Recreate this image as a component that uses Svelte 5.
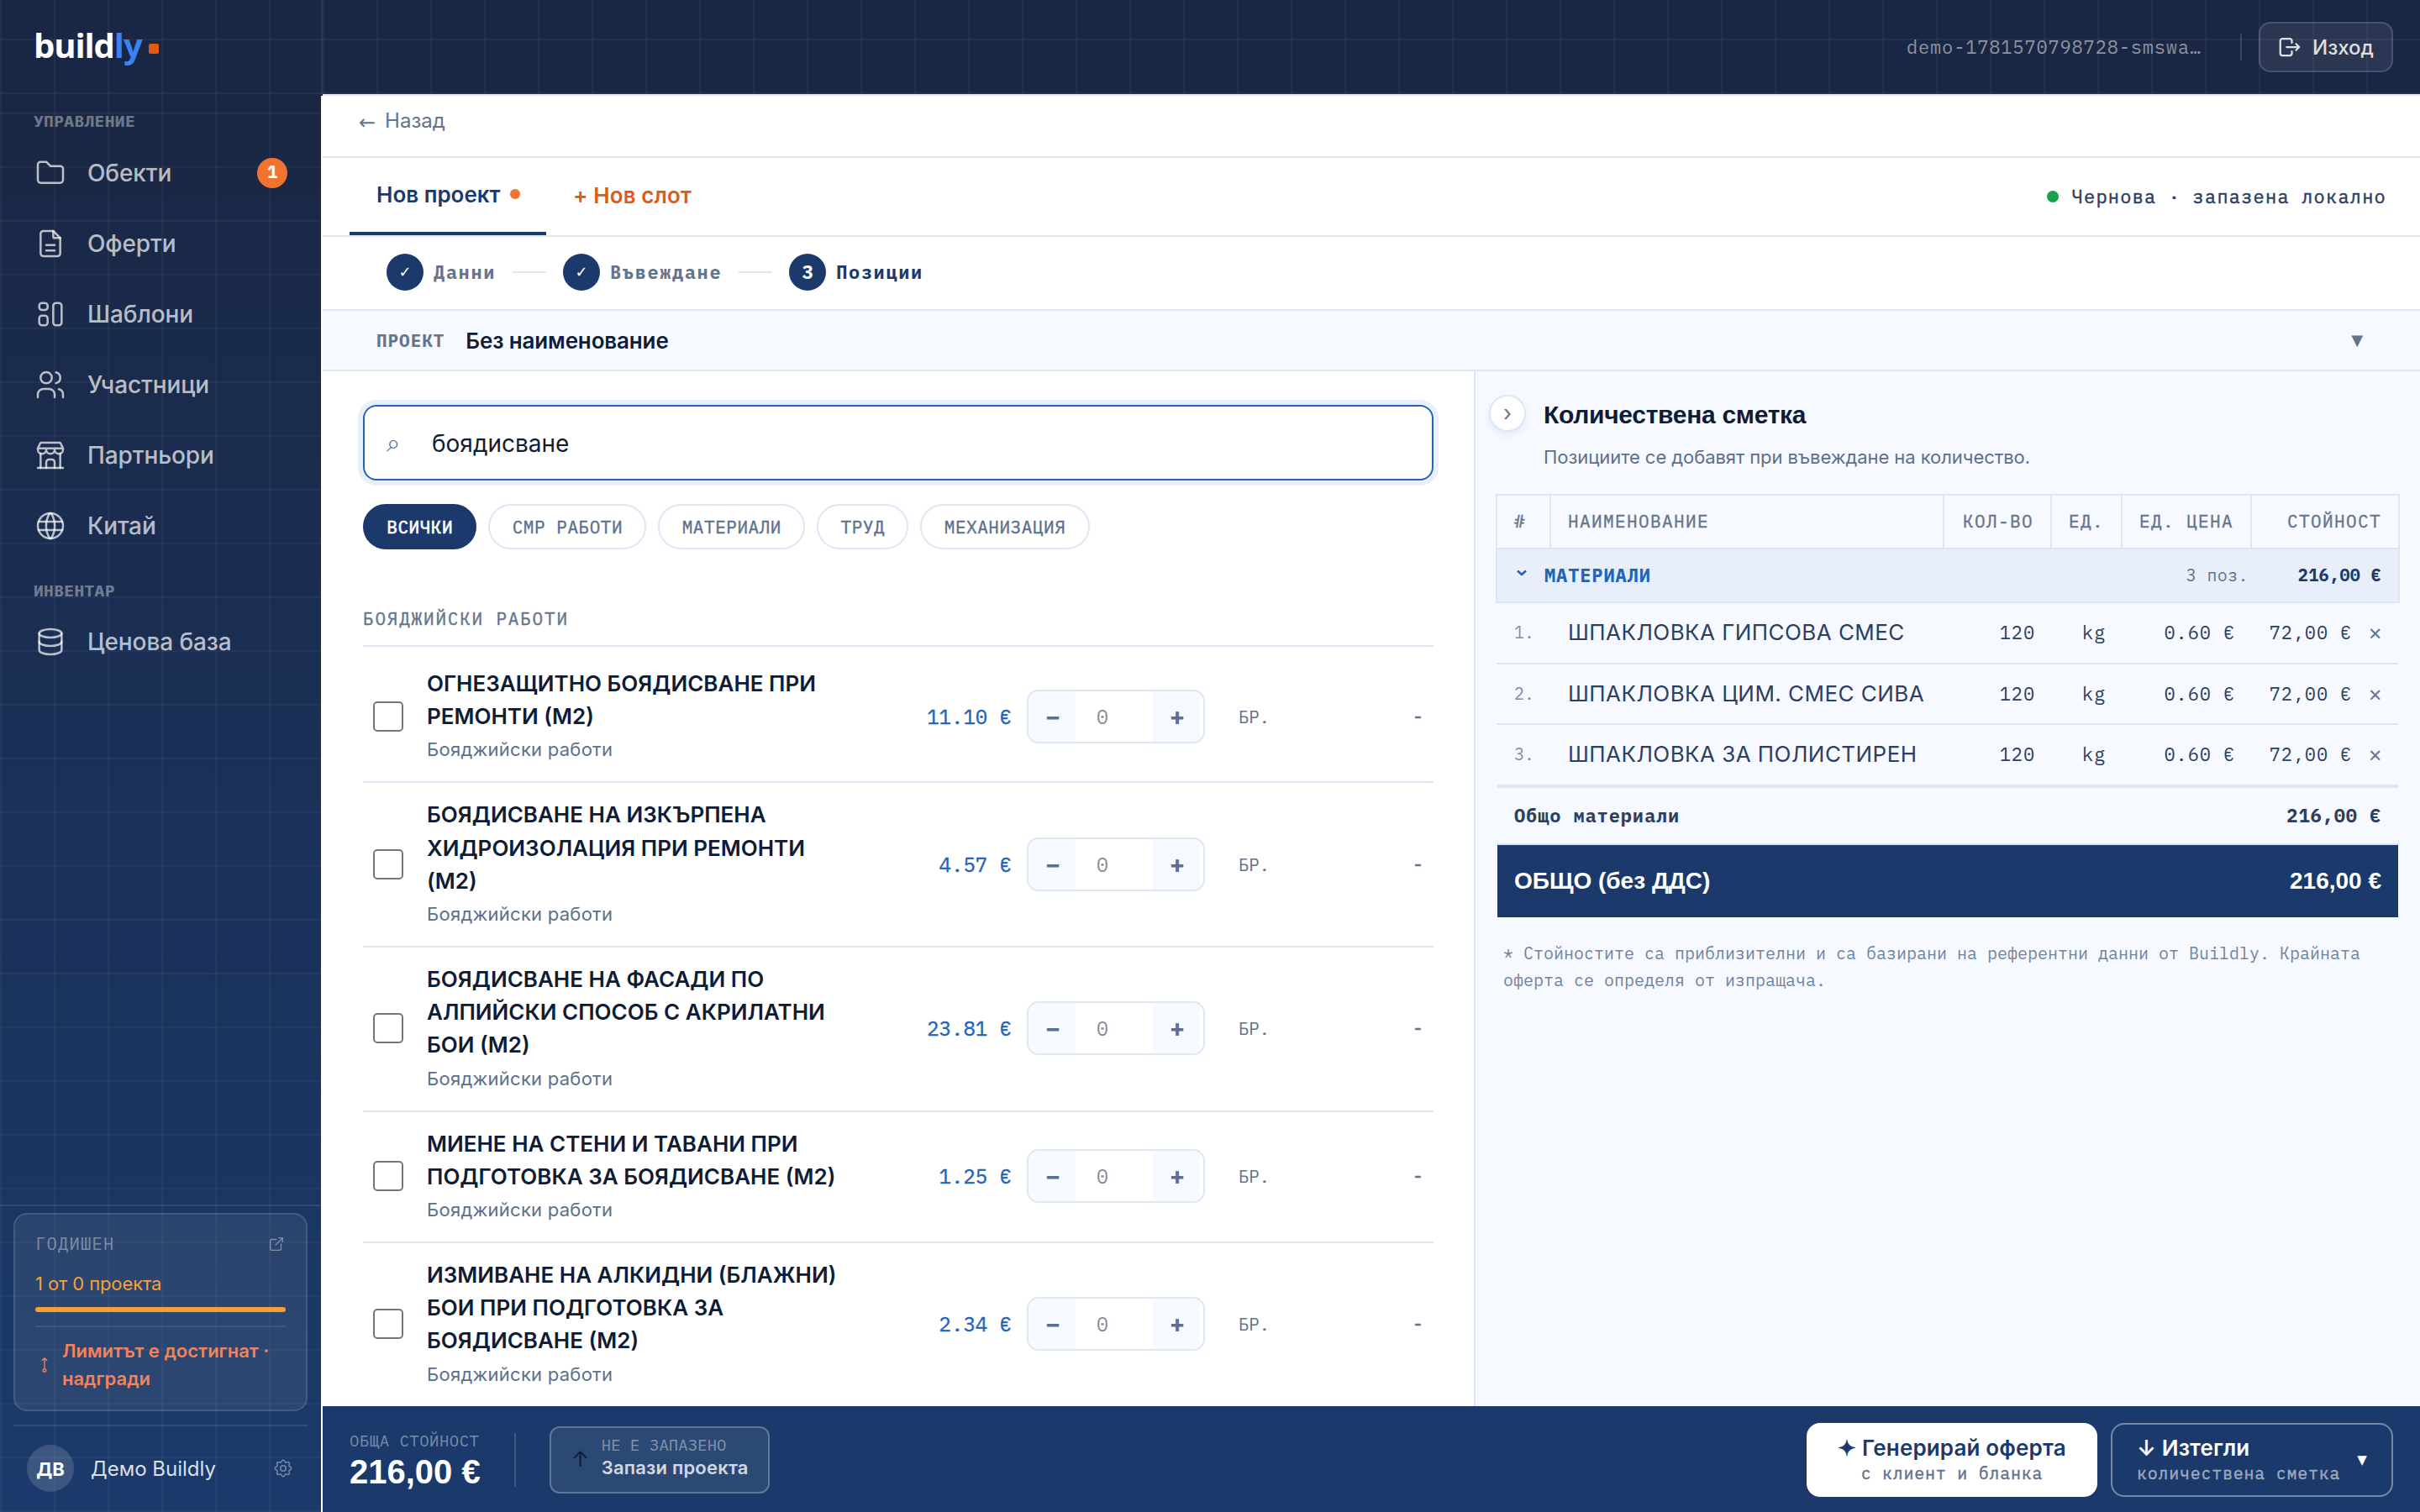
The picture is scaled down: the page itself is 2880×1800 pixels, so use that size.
<script lang="ts">
    type NavItem = { label: string; icon: string; badge?: number };

    // Sidebar navigation
    const manage: NavItem[] = [
        { label: 'Обекти', icon: 'folder', badge: 1 },
        { label: 'Оферти', icon: 'file' },
        { label: 'Шаблони', icon: 'board' },
        { label: 'Участници', icon: 'users' },
        { label: 'Партньори', icon: 'store' },
        { label: 'Китай', icon: 'globe' }
    ];
    const inventory: NavItem[] = [{ label: 'Ценова база', icon: 'database' }];

    const steps = [
        { mark: '✓', label: 'Данни' },
        { mark: '✓', label: 'Въвеждане' },
        { mark: '3', label: 'Позиции' }
    ];

    const filters = ['ВСИЧКИ', 'СМР РАБОТИ', 'МАТЕРИАЛИ', 'ТРУД', 'МЕХАНИЗАЦИЯ'];
    let activeFilter = $state('ВСИЧКИ');
    let query = $state('боядисване');

    const category = 'Бояджийски работи';
    const works = [
        { name: 'ОГНЕЗАЩИТНО БОЯДИСВАНЕ ПРИ РЕМОНТИ (М2)', price: 11.1 },
        { name: 'БОЯДИСВАНЕ НА ИЗКЪРПЕНА ХИДРОИЗОЛАЦИЯ ПРИ РЕМОНТИ (М2)', price: 4.57 },
        { name: 'БОЯДИСВАНЕ НА ФАСАДИ ПО АЛПИЙСКИ СПОСОБ С АКРИЛАТНИ БОИ (М2)', price: 23.81 },
        { name: 'МИЕНЕ НА СТЕНИ И ТАВАНИ ПРИ ПОДГОТОВКА ЗА БОЯДИСВАНЕ (М2)', price: 1.25 },
        { name: 'ИЗМИВАНЕ НА АЛКИДНИ (БЛАЖНИ) БОИ ПРИ ПОДГОТОВКА ЗА БОЯДИСВАНЕ (М2)', price: 2.34 }
    ];

    const materials = [
        { name: 'ШПАКЛОВКА ГИПСОВА СМЕС', qty: 120, unit: 'kg', price: 0.6 },
        { name: 'ШПАКЛОВКА ЦИМ. СМЕС СИВА', qty: 120, unit: 'kg', price: 0.6 },
        { name: 'ШПАКЛОВКА ЗА ПОЛИСТИРЕН', qty: 120, unit: 'kg', price: 0.6 }
    ];

    const money = (v: number) => v.toFixed(2).replace('.', ',') + ' €';
    const total = $derived(materials.reduce((sum, m) => sum + m.qty * m.price, 0));
</script>

{#snippet icon(name: string)}
    <svg class="icon" viewBox="0 0 24 24" fill="none" stroke="currentColor" stroke-width="1.5" stroke-linecap="round" stroke-linejoin="round">
        {#if name === 'folder'}
            <path d="M5 4h4l3 3h7a2 2 0 0 1 2 2v8a2 2 0 0 1 -2 2h-14a2 2 0 0 1 -2 -2v-11a2 2 0 0 1 2 -2" />
        {:else if name === 'file'}
            <path d="M14 3v4a1 1 0 0 0 1 1h4" />
            <path d="M17 21h-10a2 2 0 0 1 -2 -2v-14a2 2 0 0 1 2 -2h7l5 5v11a2 2 0 0 1 -2 2z" />
            <path d="M9 13h6M9 17h6" />
        {:else if name === 'board'}
            <rect x="4" y="4" width="6" height="5" rx="2" />
            <rect x="4" y="13" width="6" height="7" rx="2" />
            <rect x="14" y="4" width="6" height="16" rx="2" />
        {:else if name === 'users'}
            <circle cx="9" cy="7" r="4" />
            <path d="M3 21v-2a4 4 0 0 1 4 -4h4a4 4 0 0 1 4 4v2" />
            <path d="M16 3.13a4 4 0 0 1 0 7.75" />
            <path d="M21 21v-2a4 4 0 0 0 -3 -3.85" />
        {:else if name === 'store'}
            <path d="M3 21h18" />
            <path d="M3 7v1a3 3 0 0 0 6 0v-1m0 1a3 3 0 0 0 6 0v-1m0 1a3 3 0 0 0 6 0v-1h-18l2 -4h14l2 4" />
            <path d="M5 21v-10.15M19 21v-10.15" />
            <path d="M9 21v-4a2 2 0 0 1 2 -2h2a2 2 0 0 1 2 2v4" />
        {:else if name === 'globe'}
            <circle cx="12" cy="12" r="9" />
            <path d="M3.6 9h16.8M3.6 15h16.8" />
            <path d="M11.5 3a17 17 0 0 0 0 18M12.5 3a17 17 0 0 1 0 18" />
        {:else if name === 'database'}
            <ellipse cx="12" cy="6" rx="8" ry="3" />
            <path d="M4 6v6a8 3 0 0 0 16 0v-6" />
            <path d="M4 12v6a8 3 0 0 0 16 0v-6" />
        {:else if name === 'logout'}
            <path d="M14 8v-2a2 2 0 0 0 -2 -2h-7a2 2 0 0 0 -2 2v12a2 2 0 0 0 2 2h7a2 2 0 0 0 2 -2v-2" />
            <path d="M9 12h12l-3 -3M18 15l3 -3" />
        {:else if name === 'external'}
            <path d="M12 6h-6a2 2 0 0 0 -2 2v10a2 2 0 0 0 2 2h10a2 2 0 0 0 2 -2v-6" />
            <path d="M11 13l9 -9M15 4h5v5" />
        {:else if name === 'upgrade'}
            <path d="M12 17v-14M9 6l3 -3l3 3" />
            <circle cx="12" cy="19" r="2" />
        {:else if name === 'gear'}
            <path d="M10.325 4.317c.426 -1.756 2.924 -1.756 3.35 0a1.724 1.724 0 0 0 2.573 1.066c1.543 -.94 3.31 .826 2.37 2.37a1.724 1.724 0 0 0 1.065 2.572c1.756 .426 1.756 2.924 0 3.35a1.724 1.724 0 0 0 -1.066 2.573c.94 1.543 -.826 3.31 -2.37 2.37a1.724 1.724 0 0 0 -2.572 1.065c-.426 1.756 -2.924 1.756 -3.35 0a1.724 1.724 0 0 0 -2.573 -1.066c-1.543 .94 -3.31 -.826 -2.37 -2.37a1.724 1.724 0 0 0 -1.065 -2.572c-1.756 -.426 -1.756 -2.924 0 -3.35a1.724 1.724 0 0 0 1.066 -2.573c-.94 -1.543 .826 -3.31 2.37 -2.37c1 .608 2.296 .07 2.572 -1.065z" />
            <circle cx="12" cy="12" r="3" />
        {/if}
    </svg>
{/snippet}

{#snippet navItem(item: NavItem)}
    <a class="nav-item" href="#nav">
        {@render icon(item.icon)}
        <span>{item.label}</span>
        {#if item.badge}<b class="badge">{item.badge}</b>{/if}
    </a>
{/snippet}

<div class="app">
    <header class="topbar">
        <div class="logo">build<span>ly</span><i></i></div>
        <div class="account">
            <span class="email">demo-1781570798728-smswa…</span>
            <span class="account-line"></span>
            <button class="logout">{@render icon('logout')}Изход</button>
        </div>
    </header>

    <aside class="sidebar">
        <nav>
            <div class="nav-label">УПРАВЛЕНИЕ</div>
            {#each manage as item}{@render navItem(item)}{/each}
            <div class="nav-label second">ИНВЕНТАР</div>
            {#each inventory as item}{@render navItem(item)}{/each}
        </nav>

        <div class="side-foot">
            <div class="plan">
                <div class="plan-head"><span>ГОДИШЕН</span>{@render icon('external')}</div>
                <div class="plan-usage">1 от 0 проекта</div>
                <div class="plan-bar"></div>
                <div class="plan-limit">
                    {@render icon('upgrade')}
                    <span>Лимитът е достигнат · надгради</span>
                </div>
            </div>
            <div class="user">
                <span class="avatar" lang="bg">ДВ</span>
                <span class="user-name">Демо Buildly</span>
                {@render icon('gear')}
            </div>
        </div>
    </aside>

    <main>
        <div class="back"><span class="back-arrow">←</span>Назад</div>

        <div class="tabs">
            <button class="tab">Нов проект<i></i></button>
            <button class="tab-add">+ Нов слот</button>
            <div class="status"><i></i>Чернова · запазена локално</div>
        </div>

        <div class="steps">
            {#each steps as step, i}
                {#if i > 0}<span class="step-line"></span>{/if}
                <span class="step-mark" class:check={step.mark === '✓'}>{step.mark}</span>
                <span class="step-label" class:current={i === 2}>{step.label}</span>
            {/each}
        </div>

        <div class="project">
            <span class="project-label">ПРОЕКТ</span>
            <span class="project-name">Без наименование</span>
            <span class="project-toggle">▼</span>
        </div>

        <div class="content">
            <section class="catalog">
                <label class="search">
                    <span class="search-icon">⌕</span>
                    <input bind:value={query} />
                </label>

                <div class="filters">
                    {#each filters as f}
                        <button class="chip" class:active={activeFilter === f} onclick={() => (activeFilter = f)}>{f}</button>
                    {/each}
                </div>

                <div class="group-title">{category.toUpperCase()}</div>

                {#each works as work}
                    <div class="work">
                        <span class="checkbox"></span>
                        <div class="work-text">
                            <div class="work-name">{work.name}</div>
                            <div class="work-cat">{category}</div>
                        </div>
                        <span class="work-price">{work.price.toFixed(2)} €</span>
                        <div class="stepper">
                            <button>−</button>
                            <span class="amount">0</span>
                            <button>+</button>
                        </div>
                        <span class="work-unit">БР.</span>
                        <span class="work-sum">-</span>
                    </div>
                {/each}
            </section>

            <section class="bill">
                <div class="bill-head">
                    <button class="collapse">›</button>
                    <div>
                        <h2>Количествена сметка</h2>
                        <p>Позициите се добавят при въвеждане на количество.</p>
                    </div>
                </div>

                <div class="table">
                    <div class="cols thead">
                        <span>#</span>
                        <span>НАИМЕНОВАНИЕ</span>
                        <span class="right">КОЛ-ВО</span>
                        <span>ЕД.</span>
                        <span class="right">ЕД. ЦЕНА</span>
                        <span class="right">СТОЙНОСТ</span>
                    </div>
                    <div class="group-row">
                        <svg class="group-arrow" viewBox="0 0 12 8" fill="none" stroke="currentColor" stroke-width="2.6"><path d="M1 1.5l5 4.5l5 -4.5" /></svg>
                        <span class="group-name">МАТЕРИАЛИ</span>
                        <span class="group-count">{materials.length} поз.</span>
                        <span class="group-sum">{money(total)}</span>
                    </div>
                    <div class="tbody">
                        {#each materials as m, i}
                            <div class="cols trow">
                                <span class="num">{i + 1}.</span>
                                <span class="name">{m.name}</span>
                                <span class="right">{m.qty}</span>
                                <span class="right">{m.unit}</span>
                                <span class="right">{m.price.toFixed(2)} €</span>
                                <span class="sum">{money(m.qty * m.price)}<em>×</em></span>
                            </div>
                        {/each}
                        <div class="subtotal"><span>Общо материали</span><span>{money(total)}</span></div>
                        <div class="grand"><span>ОБЩО (без ДДС)</span><span>{money(total)}</span></div>
                    </div>
                </div>

                <p class="note">* Стойностите са приблизителни и са базирани на референтни данни от Buildly. Крайната оферта се определя от изпращача.</p>
            </section>
        </div>

        <footer class="bottombar">
            <div class="sum-box">
                <small>ОБЩА СТОЙНОСТ</small>
                <strong>{money(total)}</strong>
            </div>
            <span class="foot-line"></span>
            <button class="save">
                <span class="save-arrow">↑</span>
                <span class="save-text"><small>НЕ Е ЗАПАЗЕНО</small><b>Запази проекта</b></span>
            </button>
            <button class="cta generate"><b><span class="glyph">✦</span> Генерирай оферта</b><small>с клиент и бланка</small></button>
            <button class="cta download">
                <span class="dl-text"><b><span class="glyph">↓</span> Изтегли</b><small>количествена сметка</small></span>
                <span class="caret">▼</span>
            </button>
        </footer>
    </main>
</div>

<style>
    :global(body) {
        margin: 0;
        background: #fff;
    }

    .app {
        --navy: #1b3a6b;
        --ink: #0f1c35;
        --text: #2d3f5f;
        --muted: #64748b;
        --line: #dce6f5;
        --soft: #f6f9ff;
        --blue: #2563b8;
        --orange: #f07330;
        --mono: 'IBM Plex Mono', 'Liberation Mono', monospace;
        --head: 'Liberation Sans', Arial, sans-serif;
        display: grid;
        grid-template: 114px 1686px / 384px 1fr;
        width: 2880px;
        height: 1800px;
        overflow: hidden;
        font-family: Inter, sans-serif;
        color: var(--ink);
    }

    .app * {
        box-sizing: border-box;
    }

    button {
        font: inherit;
        color: inherit;
        margin: 0;
        padding: 0;
        border: 0;
        background: none;
    }

    .icon {
        width: 40px;
        height: 40px;
        flex: none;
    }

    /* Top bar */
    .topbar {
        grid-column: 1 / -1;
        display: flex;
        align-items: center;
        justify-content: space-between;
        height: 114px;
        padding: 0 32px 2px 40px;
        background-color: #1a2744;
        background-image:
            linear-gradient(var(--line), var(--line)),
            linear-gradient(rgba(255, 255, 255, 0.07), rgba(255, 255, 255, 0.07)),
            linear-gradient(rgba(255, 255, 255, 0.04) 2px, transparent 2px),
            linear-gradient(90deg, rgba(255, 255, 255, 0.04) 2px, transparent 2px);
        background-size: 2496px 2px, 2px 112px, 64px 64px, 64px 64px;
        background-position: 384px 112px, 382px 0, 0 46px, 0 0;
        background-repeat: no-repeat, no-repeat, repeat, repeat;
    }

    .logo {
        display: flex;
        align-items: center;
        padding-bottom: 4px;
        font: 700 40px/48px 'Open Sans', sans-serif;
        letter-spacing: -1.1px;
        color: #fff;
    }

    .logo span {
        color: #3b82f6;
    }

    .logo i {
        width: 12px;
        height: 12px;
        margin: 7px 0 0 8px;
        border-radius: 2px;
        background: #e05a14;
    }

    .account {
        display: flex;
        align-items: center;
    }

    .email {
        font: 22px/30px var(--mono);
        letter-spacing: 0.84px;
        color: rgba(255, 255, 255, 0.5);
    }

    .account-line {
        width: 2px;
        height: 32px;
        margin: 0 20px 0 46px;
        background: rgba(255, 255, 255, 0.15);
    }

    .logout {
        display: flex;
        align-items: center;
        gap: 12px;
        width: 160px;
        height: 60px;
        padding-left: 20px;
        border: 2px solid rgba(255, 255, 255, 0.14);
        border-radius: 14px;
        background: rgba(255, 255, 255, 0.08);
        font-size: 24px;
        font-weight: 500;
        color: rgba(255, 255, 255, 0.85);
    }

    .logout .icon {
        width: 30px;
        height: 30px;
        stroke-width: 1.8;
    }

    /* Sidebar */
    .sidebar {
        display: flex;
        flex-direction: column;
        justify-content: space-between;
        width: 382px;
        background-image:
            linear-gradient(rgba(255, 255, 255, 0.04) 2px, transparent 2px),
            linear-gradient(90deg, rgba(255, 255, 255, 0.04) 2px, transparent 2px),
            linear-gradient(#1a2744, #1b3a6b);
        background-size: 64px 64px, 64px 64px, 100% 100%;
        background-position: 0 20px, 0 0, 0 0;
    }

    .nav-label {
        padding: 18px 0 0 40px;
        height: 50px;
        font: 700 19.5px/24px var(--mono);
        letter-spacing: 0.4px;
        color: rgba(255, 255, 255, 0.4);
    }

    .nav-label.second {
        padding-top: 23px;
        height: 54px;
    }

    .nav-item {
        display: flex;
        align-items: center;
        gap: 24px;
        height: 84px;
        padding: 0 40px;
        font-size: 28px;
        font-weight: 500;
        letter-spacing: -0.1px;
        color: rgba(255, 255, 255, 0.7);
        text-decoration: none;
    }

    .badge {
        width: 36px;
        height: 36px;
        margin-left: auto;
        border-radius: 50%;
        background: var(--orange);
        color: #fff;
        font: 700 21px/33px var(--mono);
        text-align: center;
    }

    .side-foot {
        padding: 8px 16px 24px;
        border-top: 2px solid rgba(255, 255, 255, 0.1);
    }

    .plan {
        height: 236px;
        padding: 22px 24px 0;
        border: 2px solid rgba(255, 255, 255, 0.12);
        border-radius: 16px;
        background: rgba(255, 255, 255, 0.07);
    }

    .plan-head {
        display: flex;
        align-items: center;
        justify-content: space-between;
        height: 26px;
        font: 20.5px/26px var(--mono);
        letter-spacing: 1.2px;
        color: rgba(255, 255, 255, 0.4);
    }

    .plan-head .icon {
        width: 22px;
        height: 22px;
    }

    .plan-usage {
        margin: 19px 0 13px;
        font-size: 22px;
        line-height: 30px;
        letter-spacing: -0.1px;
        color: #f6a03c;
    }

    .plan-bar {
        height: 6px;
        border-radius: 3px;
        background: #f6a03c;
    }

    .plan-limit {
        display: flex;
        align-items: center;
        gap: 10px;
        margin-top: 16px;
        padding-top: 12px;
        border-top: 2px solid rgba(255, 255, 255, 0.1);
        font-size: 22px;
        font-weight: 600;
        line-height: 32.6px;
        color: #f4825a;
    }

    .plan-limit .icon {
        width: 22px;
        height: 22px;
    }

    .user {
        display: flex;
        align-items: center;
        margin-top: 16px;
        padding: 22px 16px 0 16px;
        border-top: 2px solid rgba(255, 255, 255, 0.1);
        color: rgba(255, 255, 255, 0.4);
    }

    .avatar {
        width: 56px;
        height: 56px;
        border-radius: 50%;
        background: rgba(255, 255, 255, 0.15);
        color: #fff;
        font: 700 22px/58px Inter, sans-serif;
        text-align: center;
    }

    .user-name {
        flex: 1;
        margin-left: 20px;
        font-size: 24px;
        color: rgba(255, 255, 255, 0.85);
    }

    .user .icon {
        width: 26px;
        height: 26px;
    }

    /* Main column */
    main {
        display: flex;
        flex-direction: column;
        min-width: 0;
    }

    .back {
        display: flex;
        align-items: center;
        gap: 11px;
        height: 74px;
        padding: 0 43px 13px;
        border-bottom: 2px solid var(--line);
        font-size: 24px;
        color: var(--muted);
    }

    .back-arrow {
        padding-top: 4px;
        font: 24px/28px 'DejaVu Sans', sans-serif;
    }

    .tabs {
        display: flex;
        align-items: stretch;
        height: 94px;
        padding: 0 40px 0 32px;
        border-bottom: 2px solid var(--line);
    }

    .tab,
    .tab-add {
        font-size: 26px;
        font-weight: 600;
    }

    .tab {
        display: flex;
        align-items: center;
        gap: 11px;
        width: 234px;
        padding: 0 0 2px 32px;
        border-bottom: 4px solid var(--navy);
        color: var(--navy);
    }

    .tab i,
    .status i {
        width: 12px;
        height: 12px;
        border-radius: 50%;
        background: var(--orange);
    }

    .tab-add {
        margin-left: 32px;
        padding-bottom: 3px;
        letter-spacing: 0.1px;
        color: #e05a14;
    }

    .status {
        display: flex;
        align-items: center;
        gap: 16px;
        margin-left: auto;
        font: 22px/30px var(--mono);
        letter-spacing: 1.2px;
        -webkit-text-stroke: 0.5px currentColor;
        color: var(--text);
    }

    .status i {
        width: 14px;
        height: 14px;
        background: #16a34a;
    }

    .steps {
        display: flex;
        align-items: center;
        height: 88px;
        padding: 0 0 2px 76px;
        border-bottom: 2px solid var(--line);
    }

    .step-mark {
        width: 44px;
        height: 44px;
        border-radius: 50%;
        background: var(--navy);
        color: #fff;
        font: 700 22px/44px var(--mono);
        text-align: center;
    }

    .step-mark.check {
        font: 18px/44px 'DejaVu Sans', sans-serif;
    }

    .step-label {
        margin-left: 12px;
        font: 700 22px/30px var(--mono);
        letter-spacing: 1.6px;
        color: var(--muted);
    }

    .step-label.current {
        color: var(--navy);
    }

    .step-line {
        width: 40px;
        height: 2px;
        margin: 0 20px;
        background: var(--line);
    }

    .project {
        display: flex;
        align-items: center;
        height: 72px;
        padding: 0 68px 0 64px;
        border-bottom: 2px solid var(--line);
        background: var(--soft);
    }

    .project-label {
        font: 700 21px/28px var(--mono);
        letter-spacing: 0.95px;
        color: var(--muted);
    }

    .project-name {
        margin-left: 25px;
        font-size: 26px;
        font-weight: 600;
        letter-spacing: -0.15px;
    }

    .project-toggle {
        margin-left: auto;
        font: 18px/20px 'DejaVu Sans', sans-serif;
        color: var(--muted);
    }

    .content {
        display: grid;
        grid-template-columns: 1370px 1fr;
        height: 1232px;
        overflow: hidden;
    }

    /* Catalog */
    .catalog {
        min-height: 0;
        padding: 40px 48px 0;
        background: #fff;
    }

    .search {
        display: flex;
        align-items: center;
        height: 90px;
        padding-left: 26px;
        border: 2px solid var(--blue);
        border-radius: 16px;
        box-shadow: 0 0 0 6px rgba(37, 99, 184, 0.1);
    }

    .search-icon {
        width: 54px;
        font-size: 29px;
        color: var(--muted);
    }

    .search input {
        flex: 1;
        padding: 2px 0 0;
        border: 0;
        outline: 0;
        background: none;
        font: 28px/36px Inter, sans-serif;
        color: var(--ink);
    }

    .filters {
        display: flex;
        gap: 14px;
        margin-top: 28px;
    }

    .chip {
        height: 54px;
        padding: 0 26.3px;
        border: 2px solid var(--line);
        border-radius: 27px;
        font: 21px/28px var(--mono);
        letter-spacing: 0.54px;
        -webkit-text-stroke: 0.4px currentColor;
        color: #5c6f8c;
    }

    .chip.active {
        border-color: var(--navy);
        background: var(--navy);
        color: #fff;
        -webkit-text-stroke-width: 0.7px;
    }

    .group-title {
        height: 116px;
        margin-bottom: 6px;
        padding-top: 67px;
        border-bottom: 2px solid var(--line);
        font: 21px/30px var(--mono);
        letter-spacing: 1.8px;
        -webkit-text-stroke: 0.4px currentColor;
        color: var(--muted);
    }

    .work {
        display: flex;
        align-items: center;
        padding: 20px 12px 21px;
        border-bottom: 2px solid var(--line);
    }

    .checkbox {
        width: 36px;
        height: 36px;
        border: 2px solid #767676;
        border-radius: 5px;
    }

    .work-text {
        width: 500px;
        margin: -2px 0 1px 28px;
    }

    .work-name {
        font-size: 26px;
        font-weight: 600;
        line-height: 39.2px;
    }

    .work-cat {
        margin-top: 6px;
        padding-bottom: 2px;
        font-size: 22px;
        line-height: 28px;
        letter-spacing: 0.26px;
        color: #5c6f8c;
    }

    .work-price {
        width: 196px;
        font: 24px/32px var(--mono);
        -webkit-text-stroke: 0.4px currentColor;
        text-align: right;
        color: var(--blue);
    }

    .stepper {
        display: flex;
        width: 212px;
        height: 64px;
        margin-left: 18px;
        border: 2px solid var(--line);
        border-radius: 14px;
        overflow: hidden;
    }

    .stepper button {
        width: 56px;
        padding-left: 2px;
        background: var(--soft);
        font: 700 30px/60px var(--mono);
        color: #5c6f8c;
    }

    .amount {
        width: 92px;
        padding-right: 28px;
        font: 24px/60px var(--mono);
        text-align: center;
        color: #8a8f98;
    }

    .work-unit {
        margin-left: 40px;
        font: 21px/28px var(--mono);
        letter-spacing: -0.4px;
        color: var(--muted);
    }

    .work-sum {
        margin-left: auto;
        font: 22px/28px var(--mono);
        -webkit-text-stroke: 0.5px currentColor;
        color: var(--muted);
    }

    /* Bill of quantities */
    .bill {
        padding: 28px 24px 0;
        border-left: 2px solid var(--line);
        background: var(--soft);
    }

    .bill-head {
        display: flex;
        gap: 21px;
        height: 118px;
        margin-left: -8px;
    }

    .collapse {
        width: 44px;
        height: 44px;
        border: 2px solid var(--line);
        border-radius: 50%;
        background: #fff;
        box-shadow: 0 4px 8px rgba(27, 58, 107, 0.08);
        font-size: 26px;
        line-height: 36px;
        color: var(--muted);
    }

    h2 {
        margin: 6px 0 0;
        font: 700 30px/36px var(--head);
        letter-spacing: -0.3px;
    }

    .bill-head p {
        margin: 18px 0 0;
        font-size: 22px;
        line-height: 28px;
        letter-spacing: -0.06px;
        color: #5c6f8c;
    }

    .table {
        width: 1076px;
    }

    .cols {
        display: grid;
        grid-template-columns: 64px 468px 128px 84px 154px 1fr;
    }

    .thead {
        height: 66px;
        border: 2px solid var(--line);
        font: 21px/61px var(--mono);
        letter-spacing: 1.4px;
        -webkit-text-stroke: 0.4px currentColor;
        color: var(--muted);
    }

    .thead span {
        padding: 0 20px;
        border-right: 2px solid var(--line);
        white-space: nowrap;
    }

    .thead span:last-child {
        border-right: 0;
    }

    .right {
        text-align: right;
    }

    .group-row {
        display: flex;
        align-items: center;
        height: 64px;
        padding: 0 20px;
        border: 2px solid var(--line);
        border-top: 0;
        background: #e8effb;
        font: 20px/28px var(--mono);
        letter-spacing: 0.4px;
        color: var(--muted);
    }

    .group-arrow {
        width: 12px;
        height: 8px;
        margin: 0 21px 6px 3px;
        color: var(--blue);
    }

    .group-name {
        font-size: 22px;
        font-weight: 700;
        letter-spacing: 0.88px;
        color: var(--blue);
    }

    .group-count {
        margin-left: auto;
    }

    .group-sum {
        width: 158px;
        font-weight: 700;
        text-align: right;
        color: var(--navy);
    }

    .tbody {
        margin: 0 2px;
    }

    .trow {
        height: 72.6px;
        border-bottom: 2px solid var(--line);
        font: 22px/70px var(--mono);
        letter-spacing: 0.88px;
        color: var(--text);
    }

    .trow span {
        padding: 0 20px;
        white-space: nowrap;
    }

    .trow .num {
        font-size: 20px;
        letter-spacing: 0;
        color: #8290a6;
    }

    .trow .name {
        font: 26px/70px Inter, sans-serif;
        letter-spacing: 0.45px;
    }

    .trow .sum {
        display: flex;
        justify-content: flex-end;
        gap: 19px;
    }

    .trow em {
        font-style: normal;
        font-size: 28px;
        letter-spacing: 0;
        margin-right: -1px;
        color: var(--muted);
    }

    .subtotal,
    .grand {
        display: flex;
        align-items: center;
        justify-content: space-between;
        padding: 0 20px;
    }

    .subtotal {
        height: 70px;
        border-top: 2px solid var(--line);
        border-bottom: 2px solid var(--line);
        font: 700 22px/30px var(--mono);
        letter-spacing: 0.88px;
        color: var(--text);
    }

    .grand {
        height: 86px;
        background: var(--navy);
        font: 700 28px/36px var(--head);
        color: #fff;
    }

    .note {
        width: 1040px;
        margin: 27px 0 0 9px;
        font: 20px/32px var(--mono);
        color: #74839b;
    }

    /* Bottom bar */
    .bottombar {
        display: flex;
        align-items: center;
        height: 126px;
        padding: 2px 32px 0;
        background: var(--navy);
        color: #fff;
    }

    .bottombar small,
    .bottombar b,
    .bottombar strong {
        display: block;
        white-space: nowrap;
    }

    .bottombar small {
        font: 19px/24px var(--mono);
        letter-spacing: 0.48px;
        color: rgba(255, 255, 255, 0.42);
    }

    .sum-box strong {
        margin-top: 3px;
        font: 700 40px/44px var(--head);
    }

    .foot-line {
        width: 2px;
        height: 64px;
        margin: 0 40px;
        background: rgba(255, 255, 255, 0.15);
    }

    .save {
        display: flex;
        align-items: center;
        width: 262px;
        height: 80px;
        padding: 0 0 4px 24px;
        border: 2px solid rgba(255, 255, 255, 0.25);
        border-radius: 12px;
        background: rgba(255, 255, 255, 0.08);
        text-align: left;
    }

    .save-arrow {
        width: 36px;
        font-size: 26px;
        color: var(--ink);
    }

    .save small {
        margin-top: -2px;
        letter-spacing: 0.05px;
    }

    .save b {
        font-size: 22px;
        font-weight: 600;
        line-height: 30px;
        letter-spacing: 0.2px;
        color: rgba(255, 255, 255, 0.8);
    }

    .cta {
        height: 88px;
        border-radius: 16px;
    }

    .cta b {
        font-size: 26px;
        font-weight: 600;
        line-height: 32px;
        letter-spacing: 0.14px;
    }

    .cta small {
        font-size: 20px;
        line-height: 28px;
        letter-spacing: 0.75px;
        -webkit-text-stroke: 0.4px currentColor;
    }

    .generate {
        width: 346px;
        margin-left: auto;
        background: #fff;
        color: var(--navy);
    }

    .generate small {
        color: #5c6f8c;
    }

    .download {
        display: flex;
        align-items: center;
        gap: 20px;
        width: 336px;
        margin-left: 16px;
        padding-left: 29px;
        border: 2px solid rgba(255, 255, 255, 0.4);
        text-align: left;
    }

    .download small {
        color: rgba(255, 255, 255, 0.5);
    }

    .caret {
        font: 15px/20px 'DejaVu Sans', sans-serif;
    }
</style>
